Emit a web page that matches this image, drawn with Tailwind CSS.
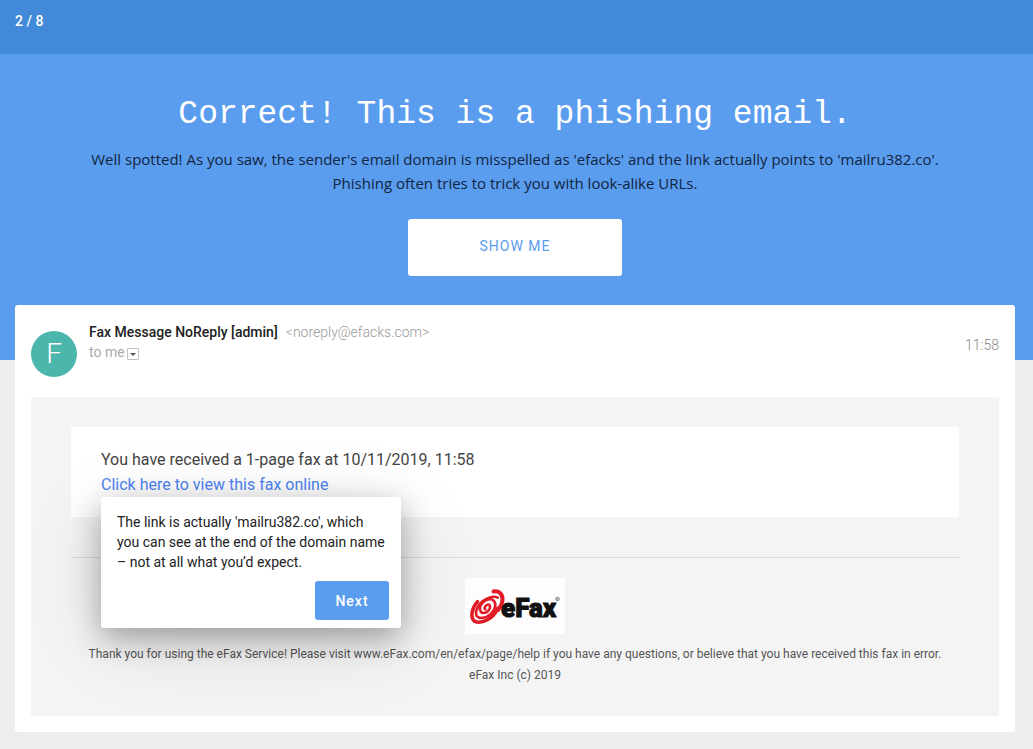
<!DOCTYPE html>
<html lang="en">
<head>
    <meta charset="UTF-8">
    <meta name="viewport" content="width=device-width, initial-scale=1.0">
    <title>Phishing Quiz</title>
    <script src="https://cdn.jsdelivr.net/npm/@tailwindcss/browser@4"></script>
</head>
<body class="min-h-screen bg-[#ededed] font-['Roboto',sans-serif] text-[#212121]">

    <!-- Progress -->
    <header class="h-[54px] bg-[#4289da] px-[15px] pt-[11px] text-white">
        <p class="text-sm leading-5 font-medium">2 / 8</p>
    </header>

    <!-- Result -->
    <section class="bg-[#5a9cee] pt-[41px] pr-[18px] pb-[84px] pl-[15px] text-center">
        <h1 class="font-['Liberation_Mono',monospace] text-[33px] leading-10 text-white">Correct! This is a phishing email.</h1>
        <p class="mx-auto mt-3 max-w-[900px] font-['Open_Sans',sans-serif] text-[15px] leading-6 text-[#10253f]">Well spotted! As you saw, the sender's email domain is misspelled as 'efacks' and the link actually points to 'mailru382.co'. Phishing often tries to trick you with look-alike URLs.</p>
        <button type="button" class="mt-6 h-[57px] w-[214px] rounded-[3px] bg-white pb-1 text-sm tracking-[1px] text-[#5a9cee]">SHOW ME</button>
    </section>

    <!-- Email -->
    <main class="-mt-[55px] pr-[18px] pb-4 pl-[15px]">
        <article class="rounded-[3px] bg-white px-4 pb-4">
            <div class="flex h-[92px] pt-[26px]">
                <div class="flex size-[46px] items-center justify-center rounded-full bg-[#4db6ac] text-[28px] font-light text-white">F</div>
                <div class="-mt-[9px] ml-3 flex-1 text-sm leading-5">
                    <p class="text-[#999]"><strong class="mr-2 font-medium text-[#212121]">Fax Message NoReply [admin]</strong><span class="font-light">&lt;noreply@efacks.com&gt;</span></p>
                    <p class="flex items-center gap-0.5 text-[#aaa]">to me
                        <button type="button" aria-label="Show details" class="mt-1 flex size-3 items-center justify-center rounded-[1px] border border-[#c2c2c2]">
                            <svg class="h-[3px] w-1.5" viewBox="0 0 6 3" fill="#555"><path d="M0 0h6L3 3z"/></svg>
                        </button>
                    </p>
                </div>
                <time class="mt-1 text-sm leading-5 font-light text-[#888]">11:58</time>
            </div>

            <div class="bg-[#f4f4f4] px-10 pt-[30px] pb-[30px]">
                <div class="bg-white px-[30px] pt-5 pb-5 text-base leading-[25px] text-[#444]">
                    <p>You have received a 1-page fax at 10/11/2019, 11:58</p>
                    <div class="relative">
                        <a href="#" class="text-[#4d84f5]">Click here to view this fax online</a>
                        <div role="dialog" aria-label="Hint" class="absolute top-full left-0 w-[300px] rounded-[3px] bg-white pt-[15px] pr-3 pb-2 pl-4 shadow-[0_10px_30px_rgba(0,0,0,0.3),0_14px_80px_rgba(0,0,0,0.12)]">
                            <p class="text-sm leading-5 text-[#212121]">The link is actually 'mailru382.co', which you can see at the end of the domain name – not at all what you’d expect.</p>
                            <div class="mt-[9px] flex justify-end">
                                <button type="button" class="h-[39px] w-[74px] rounded-[3px] bg-[#5a9cee] text-sm font-medium tracking-[1px] text-white">Next</button>
                            </div>
                        </div>
                    </div>
                </div>

                <footer class="mt-10 border-t border-[#dcdcdc] pt-5 text-center text-xs leading-[21px] text-[#555]">
                    <svg class="mx-auto mb-2.5 h-14 w-[100px] bg-[#fdfdfd]" viewBox="0 0 100 56" role="img" aria-label="eFax">
                        <g fill="none" stroke="#e11b26" stroke-linecap="round">
                            <path transform="translate(20.5 30) rotate(-40)" stroke-width="2.6" d="M-1 1A3 2 0 0 1 5 0A5.500 4 0 0 1 -6 0A8.500 6 0 0 1 11 0A11.500 8 0 0 1 -12 0A14.500 9.500 0 0 1 16 0"/>
                            <path transform="translate(20.5 30) rotate(-40)" stroke-width="3.600" d="M9 8A16 10.500 0 0 1 -17 3C-18 -3 -10 -9 -2 -10"/>
                            <path stroke-width="4" d="M28.500 13.500C34 12.500 37.500 16 37.500 21C37.500 25 35.500 29 33 32"/>
                        </g>
                        <text x="36" y="39" font-family="Roboto, sans-serif" font-size="26" font-weight="900" fill="#111" stroke="#111" stroke-width="1">eFax</text>
                        <circle cx="92.500" cy="21" r="1.800" fill="#bbb" stroke="#777" stroke-width=".8"/>
                    </svg>
                    <p>Thank you for using the eFax Service! Please visit www.eFax.com/en/efax/page/help if you have any questions, or believe that you have received this fax in error.</p>
                    <p>eFax Inc (c) 2019</p>
                </footer>
            </div>
        </article>
    </main>

</body>
</html>
